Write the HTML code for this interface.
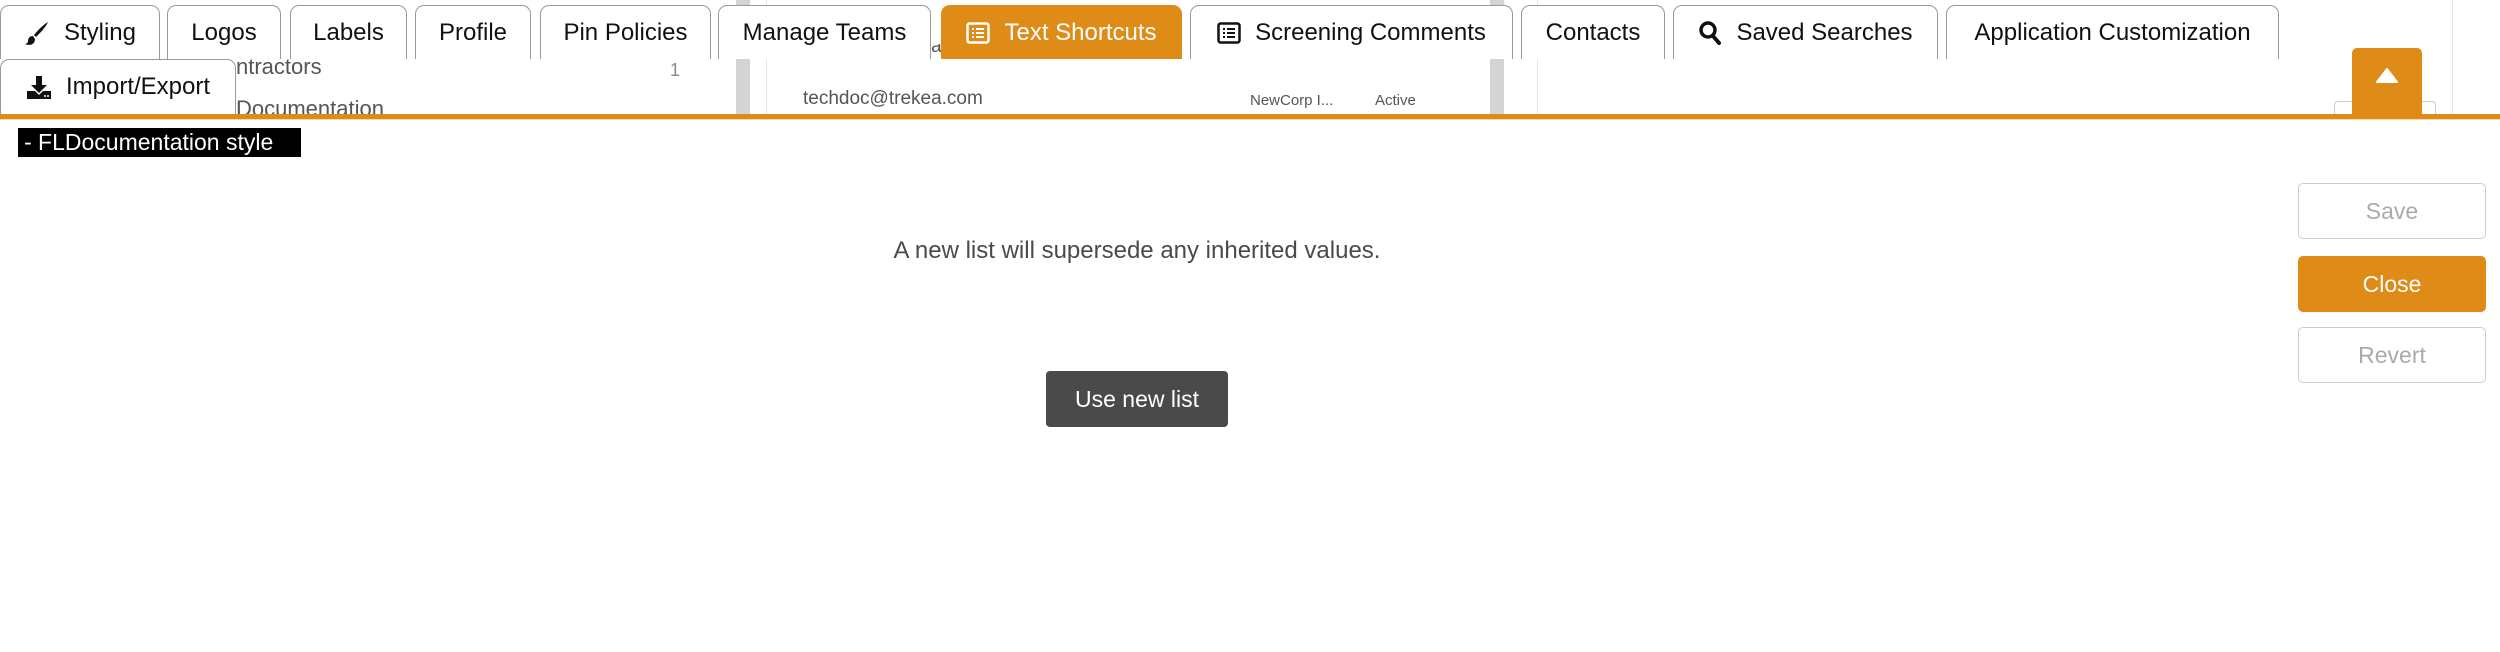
<!DOCTYPE html>
<html><head><meta charset="utf-8"><style>
*{box-sizing:border-box;margin:0;padding:0}
body{width:2500px;height:652px;background:#fff;position:relative;overflow:hidden;font-family:"Liberation Sans",sans-serif}
.a{position:absolute}
.tab{position:absolute;top:5px;height:54px;border:1.5px solid #9a9a9a;border-bottom:none;border-radius:9px 9px 0 0;background:#fff;font-size:24px;color:#111;display:flex;align-items:center;justify-content:center;gap:14px}
.tab.on{background:#df8b17;border-color:#df8b17;color:#fff}
.bg{color:#555;font-size:22px}
.btn{position:absolute;left:2298px;width:188px;height:56px;border-radius:5px;font-size:23px;display:flex;align-items:center;justify-content:center}
</style></head><body>
<div class="a bg" style="left:236px;top:54px">ntractors</div>
<div class="a bg" style="left:236px;top:96px;height:18px;overflow:hidden">Documentation</div>
<div class="a" style="left:670px;top:60px;font-size:18px;color:#888">1</div>
<div class="a" style="left:736px;top:0;width:14px;height:114px;background:#d4d4d4"></div>
<div class="a" style="left:766px;top:0;width:1px;height:114px;background:#e6e6e6"></div>
<div class="a bg" style="left:803px;top:44px;font-size:19px;height:15px;overflow:hidden;line-height:6px">techdoc@trekea.com</div>
<div class="a bg" style="left:803px;top:88px;font-size:19px">techdoc@trekea.com</div>
<div class="a" style="left:1250px;top:92px;font-size:15px;color:#555">NewCorp I...</div>
<div class="a" style="left:1375px;top:92px;font-size:15px;color:#555">Active</div>
<div class="a" style="left:1490px;top:0;width:14px;height:114px;background:#d4d4d4"></div>
<div class="a" style="left:1537px;top:0;width:1px;height:114px;background:#e6e6e6"></div>
<div class="a" style="left:2452px;top:0;width:1px;height:114px;background:#e6e6e6"></div>
<div class="a" style="left:2334px;top:101px;width:102px;height:14px;border:1px solid #ccc;border-bottom:none;border-radius:4px 4px 0 0"></div>
<div class="a" style="left:2352px;top:48px;width:70px;height:66px;background:#df8b17;border-radius:5px 5px 0 0"></div>
<svg class="a" style="left:2375px;top:68px" width="24" height="16"><path d="M12 1 L22 14 L2 14Z" fill="#fff" stroke="#fff" stroke-linejoin="round" stroke-width="2"/></svg>
<div class="tab" style="left:0;width:160px"><svg width="26" height="26" viewBox="0 0 26 26"><path d="M24 2 C20 4 13 11 10 15 L12 17 C16 13 22 7 24 2Z" fill="#111"/><path d="M9 16 C5 16 4 19 4 21 C4 23 2 24 1 24 C5 26 11 25 11 19Z" fill="#111"/></svg>Styling</div>
<div class="tab" style="left:167px;width:114px">Logos</div>
<div class="tab" style="left:290px;width:117px">Labels</div>
<div class="tab" style="left:415px;width:116px">Profile</div>
<div class="tab" style="left:540px;width:171px">Pin Policies</div>
<div class="tab" style="left:718px;width:213px">Manage Teams</div>
<div class="tab on" style="left:941px;width:241px"><svg width="24" height="22" viewBox="0 0 24 22"><rect x="1.5" y="1.5" width="21" height="19" rx="2" fill="none" stroke="#fff" stroke-width="2.5"/><path d="M6 7h2M10 7h8M6 11h2M10 11h8M6 15h2M10 15h8" stroke="#fff" stroke-width="2"/></svg>Text Shortcuts</div>
<div class="tab" style="left:1190px;width:323px"><svg width="24" height="22" viewBox="0 0 24 22"><rect x="1.5" y="1.5" width="21" height="19" rx="2" fill="none" stroke="#111" stroke-width="2.5"/><path d="M6 7h2M10 7h8M6 11h2M10 11h8M6 15h2M10 15h8" stroke="#111" stroke-width="2"/></svg>Screening Comments</div>
<div class="tab" style="left:1521px;width:144px">Contacts</div>
<div class="tab" style="left:1673px;width:265px"><svg width="24" height="26" viewBox="0 0 24 26"><circle cx="10" cy="10" r="7" fill="none" stroke="#111" stroke-width="3.5"/><path d="M15 16 L21 23" stroke="#111" stroke-width="4" stroke-linecap="round"/></svg>Saved Searches</div>
<div class="tab" style="left:1946px;width:333px">Application Customization</div>
<div class="tab" style="left:0;top:59px;width:236px;height:55px"><svg width="26" height="26" viewBox="0 0 26 26"><path d="M10 2h6v9h5l-8 8-8-8h5z" fill="#111"/><path d="M1 17h8l4 4 4-4h8v8H1z" fill="#111"/><circle cx="19" cy="22" r="1" fill="#fff"/><circle cx="22" cy="22" r="1" fill="#fff"/></svg>Import/Export</div>
<div class="a" style="left:0;top:114px;width:2500px;height:5px;background:#df8b17"></div>
<div class="a" style="left:0;top:119px;width:2500px;height:1px;background:#f3d9b0"></div>
<div class="a" style="left:18px;top:128px;width:283px;height:29px;background:#000;color:#fff;font-size:23px;line-height:29px;padding-left:6px">- FLDocumentation style</div>
<div class="a" style="left:0;top:237px;width:2274px;text-align:center;font-size:24px;color:#4a4a4a">A new list will supersede any inherited values.</div>
<div class="a" style="left:1046px;top:371px;width:182px;height:56px;background:#4a4a4a;border-radius:4px;color:#fff;font-size:23px;display:flex;align-items:center;justify-content:center">Use new list</div>
<div class="btn" style="top:183px;border:1.5px solid #ccc;color:#aaa">Save</div>
<div class="btn" style="top:256px;background:#df8b17;color:#fff">Close</div>
<div class="btn" style="top:327px;border:1.5px solid #ccc;color:#aaa">Revert</div>
</body></html>
